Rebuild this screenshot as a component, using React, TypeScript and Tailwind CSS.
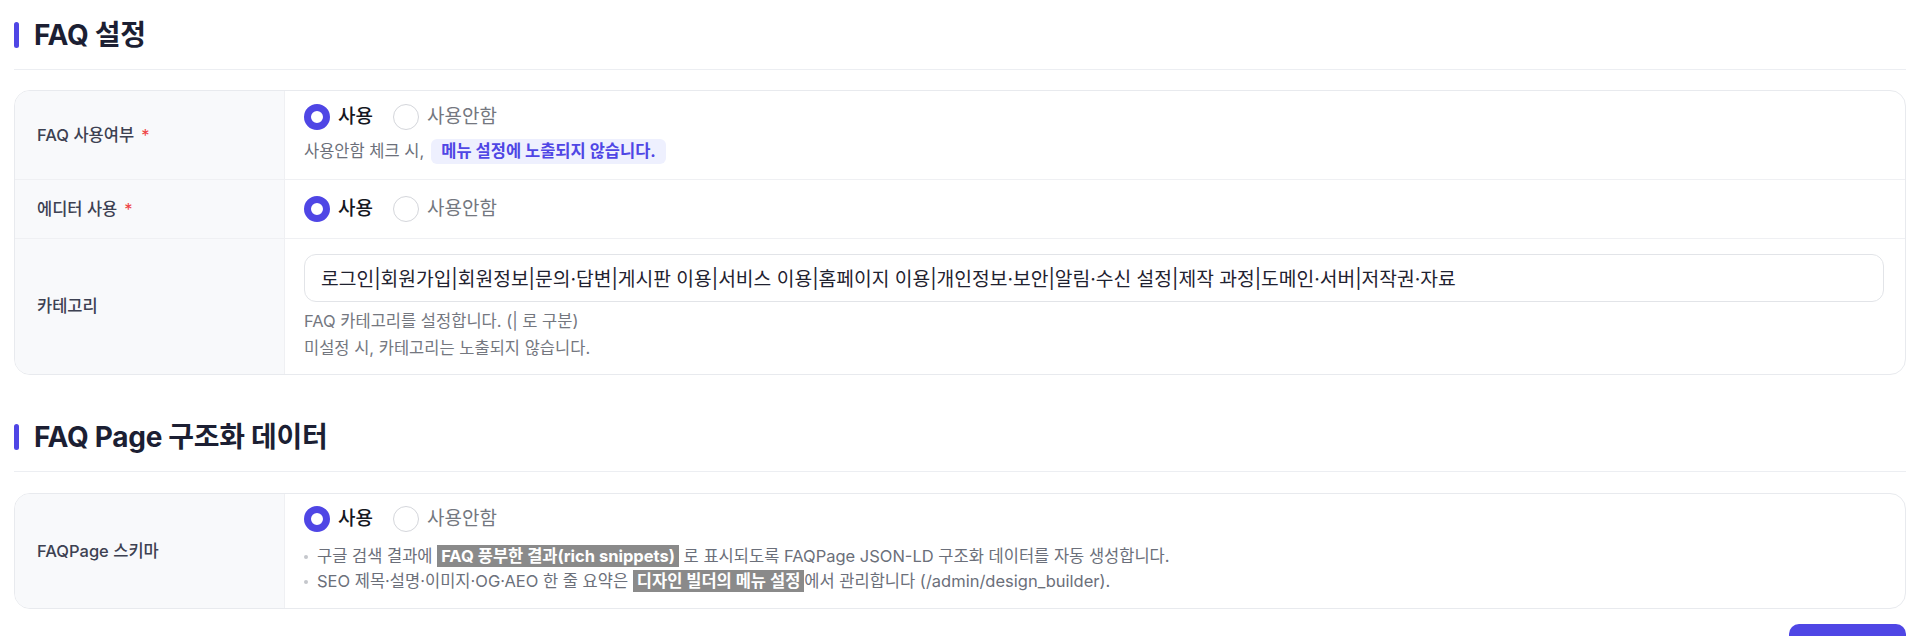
import React from "react";

const FONT = { fontFamily: "Inter, 'Noto Sans CJK KR', 'Noto Sans', sans-serif" };

function Radio({ checked, label }: { checked: boolean; label: string }) {
  return (
    <label className="flex items-center gap-2 cursor-pointer">
      {checked ? (
        <span className="w-[26px] h-[26px] rounded-full border-[7px] border-[#4f46e5] bg-white box-border" />
      ) : (
        <span className="w-[26px] h-[26px] rounded-full border border-[#d4d6db] bg-white box-border" />
      )}
      <span className={checked ? "text-[19px] text-[#15171f] font-medium" : "text-[19px] text-[#74777f]"}>{label}</span>
    </label>
  );
}

function RadioGroup() {
  return (
    <div className="flex items-center gap-[20px] h-[26px]">
      <Radio checked label="사용" />
      <Radio checked={false} label="사용안함" />
    </div>
  );
}

function Label({ text, required }: { text: string; required?: boolean }) {
  return (
    <div className="w-[270px] shrink-0 bg-[#f8f9fb] border-r border-[#eff0f3] flex items-center pl-[22px]">
      <span className="text-[16.5px] font-medium text-[#3d4152]">{text}</span>
      {required && <span className="text-[16.5px] text-[#ef4444] ml-[7px]">*</span>}
    </div>
  );
}

function SectionTitle({ title }: { title: string }) {
  return (
    <div className="flex items-center gap-[15px] h-[34px]">
      <span className="w-[5px] h-[26px] rounded-full bg-[#4f46e5]" />
      <h2 className="text-[28px] font-bold text-[#1c1f33] leading-[34px] tracking-[-0.3px]">{title}</h2>
    </div>
  );
}

export default function App() {
  return (
    <div className="bg-white min-h-[636px] px-[14px] pt-[18px] overflow-hidden" style={FONT}>
      {/* Section 1 */}
      <div className="pb-[17px] border-b border-[#eceef2]">
        <SectionTitle title="FAQ 설정" />
      </div>
      <div className="mt-5 border border-[#e8eaee] rounded-2xl overflow-hidden">
        {/* Row 1 */}
        <div className="flex border-b border-[#eff0f3]">
          <Label text="FAQ 사용여부" required />
          <div className="flex-1 pl-[19px] pr-[21px] pt-[13px] pb-[15px]">
            <RadioGroup />
            <div className="mt-2 h-[26px] flex items-center text-[16.5px] text-[#6b6f7a]">
              <span>사용안함 체크 시,</span>
              <span className="ml-[7px] h-[25px] flex items-center px-[10px] rounded-md bg-[#eef0fe] text-[#4f46e5] font-bold">
                메뉴 설정에 노출되지 않습니다.
              </span>
            </div>
          </div>
        </div>
        {/* Row 2 */}
        <div className="flex border-b border-[#eff0f3]">
          <Label text="에디터 사용" required />
          <div className="flex-1 pl-[19px] pr-[21px] py-4">
            <RadioGroup />
          </div>
        </div>
        {/* Row 3 */}
        <div className="flex">
          <Label text="카테고리" />
          <div className="flex-1 pl-[19px] pr-[21px] pt-[15px] pb-[15px]">
            <input
              className="w-full h-[48px] border border-[#e2e4e8] rounded-[12px] px-4 text-[19.25px] text-[#1f2230] outline-none bg-white"
              style={FONT}
              defaultValue="로그인|회원가입|회원정보|문의·답변|게시판 이용|서비스 이용|홈페이지 이용|개인정보·보안|알림·수신 설정|제작 과정|도메인·서버|저작권·자료"
            />
            <p className="mt-2 text-[16.5px] leading-[22px] text-[#74777f]">FAQ 카테고리를 설정합니다. (| 로 구분)</p>
            <p className="mt-[5px] text-[16.5px] leading-[22px] text-[#74777f]">미설정 시, 카테고리는 노출되지 않습니다.</p>
          </div>
        </div>
      </div>

      {/* Section 2 */}
      <div className="mt-[45px] pb-[17px] border-b border-[#eceef2]">
        <SectionTitle title="FAQ Page 구조화 데이터" />
      </div>
      <div className="mt-[21px] border border-[#e8eaee] rounded-2xl overflow-hidden">
        <div className="flex">
          <Label text="FAQPage 스키마" />
          <div className="flex-1 pl-[19px] pr-[21px] pt-[12px] pb-[14px]">
            <RadioGroup />
            <ul className="mt-3 text-[16.5px] leading-[25px] text-[#6b6f7a]">
              <li className="flex items-center">
                <span className="w-[4px] h-[4px] rounded-full bg-[#c5c7cc] mr-[9px] shrink-0" />
                <span>
                  구글 검색 결과에{" "}
                  <strong className="bg-[#8a8a8a] text-white font-bold px-[4px] py-[1px]">FAQ 풍부한 결과(rich snippets)</strong>
                  {" "}로 표시되도록 FAQPage JSON-LD 구조화 데이터를 자동 생성합니다.
                </span>
              </li>
              <li className="flex items-center">
                <span className="w-[4px] h-[4px] rounded-full bg-[#c5c7cc] mr-[9px] shrink-0" />
                <span>
                  SEO 제목·설명·이미지·OG·AEO 한 줄 요약은{" "}
                  <strong className="bg-[#8a8a8a] text-white font-bold px-[4px] py-[1px]">디자인 빌더의 메뉴 설정</strong>
                  에서 관리합니다 (/admin/design_builder).
                </span>
              </li>
            </ul>
          </div>
        </div>
      </div>

      <div className="flex justify-end mt-[15px]">
        <button aria-label="저장" className="w-[117px] h-[48px] rounded-[10px] bg-[#4f46e5]" />
      </div>
    </div>
  );
}
